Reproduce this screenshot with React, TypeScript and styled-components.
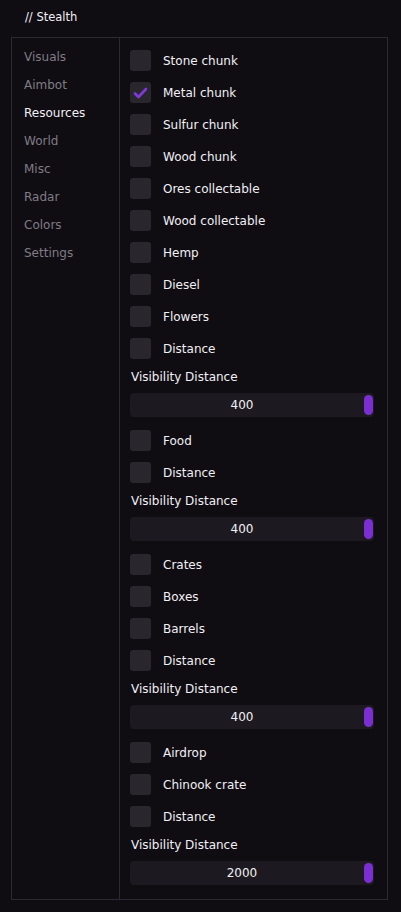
import React, { FC } from 'react';
import styled, { createGlobalStyle } from 'styled-components';

const GlobalStyle = createGlobalStyle`
  html, body {
    margin: 0;
    padding: 0;
    background: #0f0c12;
  }
  body {
    font-family: "DejaVu Sans", "Liberation Sans", sans-serif;
    font-size: 12px;
    color: #eceaf0;
  }
`;

type Item =
  | { kind: 'check'; label: string; checked?: boolean }
  | { kind: 'slider'; label: string; value: number };

const items: Item[] = [
  { kind: 'check', label: 'Stone chunk' },
  { kind: 'check', label: 'Metal chunk', checked: true },
  { kind: 'check', label: 'Sulfur chunk' },
  { kind: 'check', label: 'Wood chunk' },
  { kind: 'check', label: 'Ores collectable' },
  { kind: 'check', label: 'Wood collectable' },
  { kind: 'check', label: 'Hemp' },
  { kind: 'check', label: 'Diesel' },
  { kind: 'check', label: 'Flowers' },
  { kind: 'check', label: 'Distance' },
  { kind: 'slider', label: 'Visibility Distance', value: 400 },
  { kind: 'check', label: 'Food' },
  { kind: 'check', label: 'Distance' },
  { kind: 'slider', label: 'Visibility Distance', value: 400 },
  { kind: 'check', label: 'Crates' },
  { kind: 'check', label: 'Boxes' },
  { kind: 'check', label: 'Barrels' },
  { kind: 'check', label: 'Distance' },
  { kind: 'slider', label: 'Visibility Distance', value: 400 },
  { kind: 'check', label: 'Airdrop' },
  { kind: 'check', label: 'Chinook crate' },
  { kind: 'check', label: 'Distance' },
  { kind: 'slider', label: 'Visibility Distance', value: 2000 },
];

const tabs = ['Visuals', 'Aimbot', 'Resources', 'World', 'Misc', 'Radar', 'Colors', 'Settings'];

const App: FC = () => {
  return (
    <>
      <GlobalStyle />
      <Page>
        <Title>// Stealth</Title>
        <Panel>
          <Sidebar>
            {tabs.map((t) => (
              <Tab key={t} active={t === 'Resources'}>
                {t}
              </Tab>
            ))}
          </Sidebar>
          <Content>
            {items.map((item, i) =>
              item.kind === 'check' ? (
                <CheckRow key={i}>
                  <Box>
                    {item.checked && (
                      <svg width="15" height="12" viewBox="0 0 15 12">
                        <path
                          d="M2 6.5 L5.5 10 L13 2"
                          fill="none"
                          stroke="#7d3ad9"
                          strokeWidth="2.6"
                          strokeLinecap="round"
                          strokeLinejoin="round"
                        />
                      </svg>
                    )}
                  </Box>
                  <CheckLabel>{item.label}</CheckLabel>
                </CheckRow>
              ) : (
                <SliderBlock key={i}>
                  <SliderLabel>{item.label}</SliderLabel>
                  <Track>
                    <TrackValue>{item.value}</TrackValue>
                    <Grab />
                  </Track>
                </SliderBlock>
              )
            )}
          </Content>
        </Panel>
      </Page>
    </>
  );
};

const Page = styled.div`
  display: flex;
  flex-direction: column;
  padding: 0 13px 13px 11px;
  min-height: 912px;
  box-sizing: border-box;
`;

const Title = styled.div`
  height: 37px;
  line-height: 35px;
  padding-left: 14px;
  color: #f2f0f5;
  font-size: 11.5px;
`;

const Panel = styled.div`
  display: flex;
  flex: 1;
  border: 1px solid #2b2931;
`;

const Sidebar = styled.div`
  width: 108px;
  flex-shrink: 0;
  border-right: 1px solid #2b2931;
  padding: 11px 0 0 12px;
  box-sizing: border-box;
`;

const Tab = styled.div<{ active?: boolean }>`
  height: 28px;
  line-height: 16px;
  color: ${({ active }) => (active ? '#f2f0f5' : '#7f7c86')};
`;

const Content = styled.div`
  flex: 1;
  display: flex;
  flex-direction: column;
  gap: 11px;
  padding: 12px 13px 12px 10px;
`;

const CheckRow = styled.div`
  display: flex;
  align-items: center;
  height: 21px;
`;

const Box = styled.div`
  width: 21px;
  height: 21px;
  border-radius: 3px;
  background: #29262d;
  display: flex;
  align-items: center;
  justify-content: center;
  margin-right: 12px;
`;

const CheckLabel = styled.span`
  color: #f2f0f5;
`;

const SliderBlock = styled.div`
  display: flex;
  flex-direction: column;
  gap: 9px;
`;

const SliderLabel = styled.div`
  height: 13px;
  line-height: 13px;
  margin-top: 1px;
  padding-left: 1px;
  color: #f2f0f5;
`;

const Track = styled.div`
  position: relative;
  height: 24px;
  border-radius: 4px;
  background: #1c1a20;
  display: flex;
  align-items: center;
  justify-content: center;
  padding-right: 20px;
  margin-bottom: 2px;
`;

const TrackValue = styled.span`
  color: #f2f0f5;
`;

const Grab = styled.div`
  position: absolute;
  right: 1px;
  top: 2px;
  width: 9px;
  height: 20px;
  border-radius: 5px;
  background: #7b2fd2;
`;

export default App;
